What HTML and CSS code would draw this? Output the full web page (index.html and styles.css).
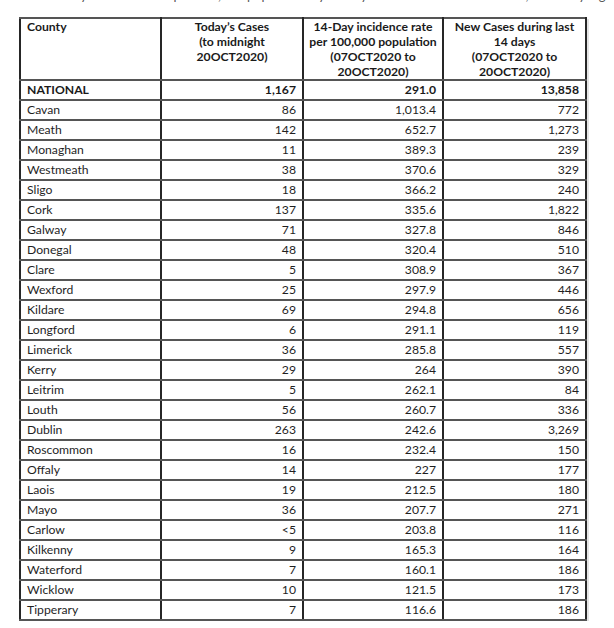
FILE: index.html
```html
<!DOCTYPE html>
<html lang="en">
<head>
<meta charset="utf-8">
<title>COVID-19 cases by county</title>
<link rel="stylesheet" href="styles.css">
</head>
<body>
<div class="intro"><p>The 14-day incidence rate per 100,000 population by county is shown in the table below, sorted by highest rate.</p></div>
<table class="cases">
  <colgroup>
    <col class="c1"><col class="c2"><col class="c3"><col class="c4">
  </colgroup>
  <thead>
    <tr>
      <th class="left">County</th>
      <th>Today’s Cases<br>(to midnight<br>20OCT2020)</th>
      <th>14-Day incidence rate<br>per 100,000 population<br>(07OCT2020 to<br>20OCT2020)</th>
      <th>New Cases during last<br>14 days<br>(07OCT2020 to<br>20OCT2020)</th>
    </tr>
  </thead>
  <tbody>
    <tr class="national"><td>NATIONAL</td><td>1,167</td><td>291.0</td><td>13,858</td></tr>
    <tr><td>Cavan</td><td>86</td><td>1,013.4</td><td>772</td></tr>
    <tr><td>Meath</td><td>142</td><td>652.7</td><td>1,273</td></tr>
    <tr><td>Monaghan</td><td>11</td><td>389.3</td><td>239</td></tr>
    <tr><td>Westmeath</td><td>38</td><td>370.6</td><td>329</td></tr>
    <tr><td>Sligo</td><td>18</td><td>366.2</td><td>240</td></tr>
    <tr><td>Cork</td><td>137</td><td>335.6</td><td>1,822</td></tr>
    <tr><td>Galway</td><td>71</td><td>327.8</td><td>846</td></tr>
    <tr><td>Donegal</td><td>48</td><td>320.4</td><td>510</td></tr>
    <tr><td>Clare</td><td>5</td><td>308.9</td><td>367</td></tr>
    <tr><td>Wexford</td><td>25</td><td>297.9</td><td>446</td></tr>
    <tr><td>Kildare</td><td>69</td><td>294.8</td><td>656</td></tr>
    <tr><td>Longford</td><td>6</td><td>291.1</td><td>119</td></tr>
    <tr><td>Limerick</td><td>36</td><td>285.8</td><td>557</td></tr>
    <tr><td>Kerry</td><td>29</td><td>264</td><td>390</td></tr>
    <tr><td>Leitrim</td><td>5</td><td>262.1</td><td>84</td></tr>
    <tr><td>Louth</td><td>56</td><td>260.7</td><td>336</td></tr>
    <tr><td>Dublin</td><td>263</td><td>242.6</td><td>3,269</td></tr>
    <tr><td>Roscommon</td><td>16</td><td>232.4</td><td>150</td></tr>
    <tr><td>Offaly</td><td>14</td><td>227</td><td>177</td></tr>
    <tr><td>Laois</td><td>19</td><td>212.5</td><td>180</td></tr>
    <tr><td>Mayo</td><td>36</td><td>207.7</td><td>271</td></tr>
    <tr><td>Carlow</td><td>&lt;5</td><td>203.8</td><td>116</td></tr>
    <tr><td>Kilkenny</td><td>9</td><td>165.3</td><td>164</td></tr>
    <tr><td>Waterford</td><td>7</td><td>160.1</td><td>186</td></tr>
    <tr><td>Wicklow</td><td>10</td><td>121.5</td><td>173</td></tr>
    <tr><td>Tipperary</td><td>7</td><td>116.6</td><td>186</td></tr>
  </tbody>
</table>
</body>
</html>
```
FILE: styles.css
```css
html, body {
  margin: 0;
  padding: 0;
  background: #ffffff;
}
body {
  font-family: Lato, "Open Sans", "Liberation Sans", sans-serif;
  font-size: 12.2px;
  color: #1f1f1f;
}
.intro {
  height: 17px;
  overflow: hidden;
  padding-left: 22px;
}
.intro p {
  margin: -13px 0 0 0;
  line-height: 16px;
  font-size: 13px;
  color: #555;
  white-space: nowrap;
}
.cases {
  margin-left: 19px;
  border-collapse: collapse;
  table-layout: fixed;
  width: 566px;
  box-shadow: 2px 2px 0 #e4e4e4;
}
.c1 { width: 141px; }
.c2 { width: 142px; }
.c3 { width: 140px; }
.c4 { width: 143px; }
.cases th, .cases td {
  border-left: 2px solid #262626;
  border-right: 2px solid #262626;
  border-top: 2px solid #555555;
  border-bottom: 2px solid #555555;
}
.cases th {
  font-weight: 700;
  color: #1a1a1a;
  text-align: center;
  vertical-align: top;
  line-height: 15px;
  padding: 0;
  white-space: nowrap;
}
.cases th.left {
  text-align: left;
  padding-left: 6px;
}
.cases td {
  line-height: 18px;
  padding: 0 6px;
  text-align: right;
  white-space: nowrap;
}
.cases td:first-child {
  text-align: left;
}
.cases tr.national td {
  font-weight: 700;
  color: #1a1a1a;
}
```
